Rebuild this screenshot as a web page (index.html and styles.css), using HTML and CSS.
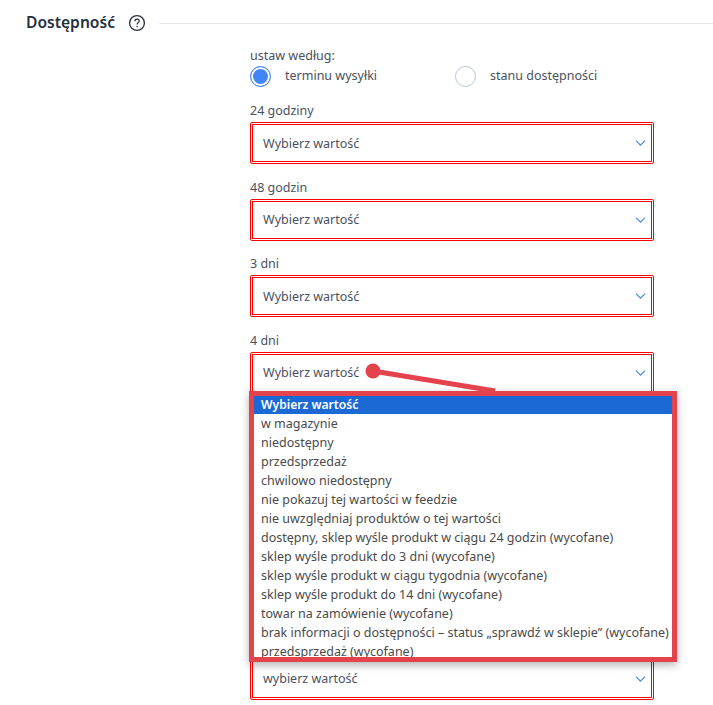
FILE: index.html
```html
<!DOCTYPE html>
<html lang="pl">
<head>
<meta charset="utf-8">
<title>Dostępność</title>
<link rel="stylesheet" href="styles.css">
</head>
<body>
<main class="page">
  <header class="section-head">
    <h2 class="section-title">Dostępność</h2>
    <svg class="help" viewBox="0 0 18 18" width="18" height="18" aria-hidden="true">
      <circle cx="9" cy="9" r="7.4" fill="none" stroke="#26303f" stroke-width="1.3"/>
      <path d="M6.9 7.2c0-1.3 1-2.1 2.2-2.1s2.1.8 2.1 1.9c0 1.6-2.1 1.7-2.1 3.4" fill="none" stroke="#26303f" stroke-width="1.2"/>
      <circle cx="9.1" cy="12.6" r=".8" fill="#26303f"/>
    </svg>
    <span class="rule"></span>
  </header>
  <section class="form">
    <div class="set-by">ustaw według:</div>
    <div class="radios">
      <label class="radio"><span class="dot on"></span>terminu wysyłki</label>
      <label class="radio"><span class="dot"></span>stanu dostępności</label>
    </div>
    <div class="field"><div class="label">24 godziny</div><div class="select">Wybierz wartość<svg class="chev" viewBox="0 0 12 7" width="11" height="6"><path d="M.7.7 6 6 11.3.7" fill="none" stroke="#3f86ea" stroke-width="1.3"/></svg></div></div>
    <div class="field"><div class="label">48 godzin</div><div class="select">Wybierz wartość<svg class="chev" viewBox="0 0 12 7" width="11" height="6"><path d="M.7.7 6 6 11.3.7" fill="none" stroke="#3f86ea" stroke-width="1.3"/></svg></div></div>
    <div class="field"><div class="label">3 dni</div><div class="select">Wybierz wartość<svg class="chev" viewBox="0 0 12 7" width="11" height="6"><path d="M.7.7 6 6 11.3.7" fill="none" stroke="#3f86ea" stroke-width="1.3"/></svg></div></div>
    <div class="field"><div class="label">4 dni</div><div class="select">Wybierz wartość<svg class="chev" viewBox="0 0 12 7" width="11" height="6"><path d="M.7.7 6 6 11.3.7" fill="none" stroke="#3f86ea" stroke-width="1.3"/></svg></div></div>
    <div class="covered"></div>
    <div class="field"><div class="label"></div><div class="select">wybierz wartość<svg class="chev" viewBox="0 0 12 7" width="11" height="6"><path d="M.7.7 6 6 11.3.7" fill="none" stroke="#3f86ea" stroke-width="1.3"/></svg></div></div>
  </section>
  <ul class="dropdown">
    <li class="opt active">Wybierz wartość</li>
    <li class="opt">w magazynie</li>
    <li class="opt">niedostępny</li>
    <li class="opt">przedsprzedaż</li>
    <li class="opt">chwilowo niedostępny</li>
    <li class="opt">nie pokazuj tej wartości w feedzie</li>
    <li class="opt">nie uwzględniaj produktów o tej wartości</li>
    <li class="opt">dostępny, sklep wyśle produkt w ciągu 24 godzin (wycofane)</li>
    <li class="opt">sklep wyśle produkt do 3 dni (wycofane)</li>
    <li class="opt">sklep wyśle produkt w ciągu tygodnia (wycofane)</li>
    <li class="opt">sklep wyśle produkt do 14 dni (wycofane)</li>
    <li class="opt">towar na zamówienie (wycofane)</li>
    <li class="opt">brak informacji o dostępności – status „sprawdź w sklepie” (wycofane)</li>
    <li class="opt">przedsprzedaż (wycofane)</li>
  </ul>
  <svg class="pointer" viewBox="0 0 140 40" width="140" height="40" aria-hidden="true">
    <circle cx="8" cy="8" r="7.5" fill="#e4434e"/>
    <path d="M8 8 130 28" stroke="#e4434e" stroke-width="5"/>
  </svg>
</main>
</body>
</html>
```
FILE: styles.css
```css
* { box-sizing: border-box; }
html, body { margin: 0; height: 705px; overflow: hidden; background: #fff; }
body { font-family: "Noto Sans", "Liberation Sans", sans-serif; font-size: 12.5px; color: #4a5160; }
.page { position: relative; height: 705px; overflow: hidden; }
.section-head { display: flex; align-items: center; padding: 12px 0 0 26px; height: 34px; }
.section-title { margin: 0 0 2px; font-size: 15.6px; font-weight: 600; color: #26303f; line-height: 22px; }
.help { margin-left: 13px; flex: none; }
.rule { flex: 1; height: 1px; background: #e8eaed; margin-left: 13px; }
.form { padding: 13px 59px 0 250px; }
.set-by { line-height: 18px; }
.radios { display: flex; height: 22px; margin-top: -1px; }
.radio { display: flex; align-items: center; flex: none; width: 205px; }
.dot { width: 21px; height: 21px; border-radius: 50%; border: 1px solid #b9c3da; margin: 2px 14px 0 0; flex: none; }
.dot.on { border-color: #4285f4; background: #4285f4; box-shadow: inset 0 0 0 2px #fff; }
.field { height: 76.5px; }
.radios + .field { margin-top: 10px; }
.covered { height: 229.5px; }
.label { line-height: 18px; padding-top: 6px; height: 26px; }
.select { display: flex; align-items: center; justify-content: space-between; height: 42px; padding: 0 7px 0 12px; border: 1px solid #f00; outline: 1px solid #f00; outline-offset: -3px; border-radius: 2px; background: #fff; }
.dropdown { position: absolute; left: 249px; top: 391px; width: 428px; height: 271px; margin: 0; padding: 0; list-style: none; background: #fff; border: 5px solid #e4434e; box-shadow: 0 3px 8px rgba(0,0,0,.3); overflow: hidden; color: #4a4a4a; }
.opt { height: 19px; line-height: 19px; padding: 0 7px; white-space: nowrap; }
.opt.active { height: 18px; line-height: 17px; background: #1a69d4; color: #fff; font-weight: 600; font-size: 12.1px; }
.pointer { position: absolute; left: 365px; top: 363px; }
```
